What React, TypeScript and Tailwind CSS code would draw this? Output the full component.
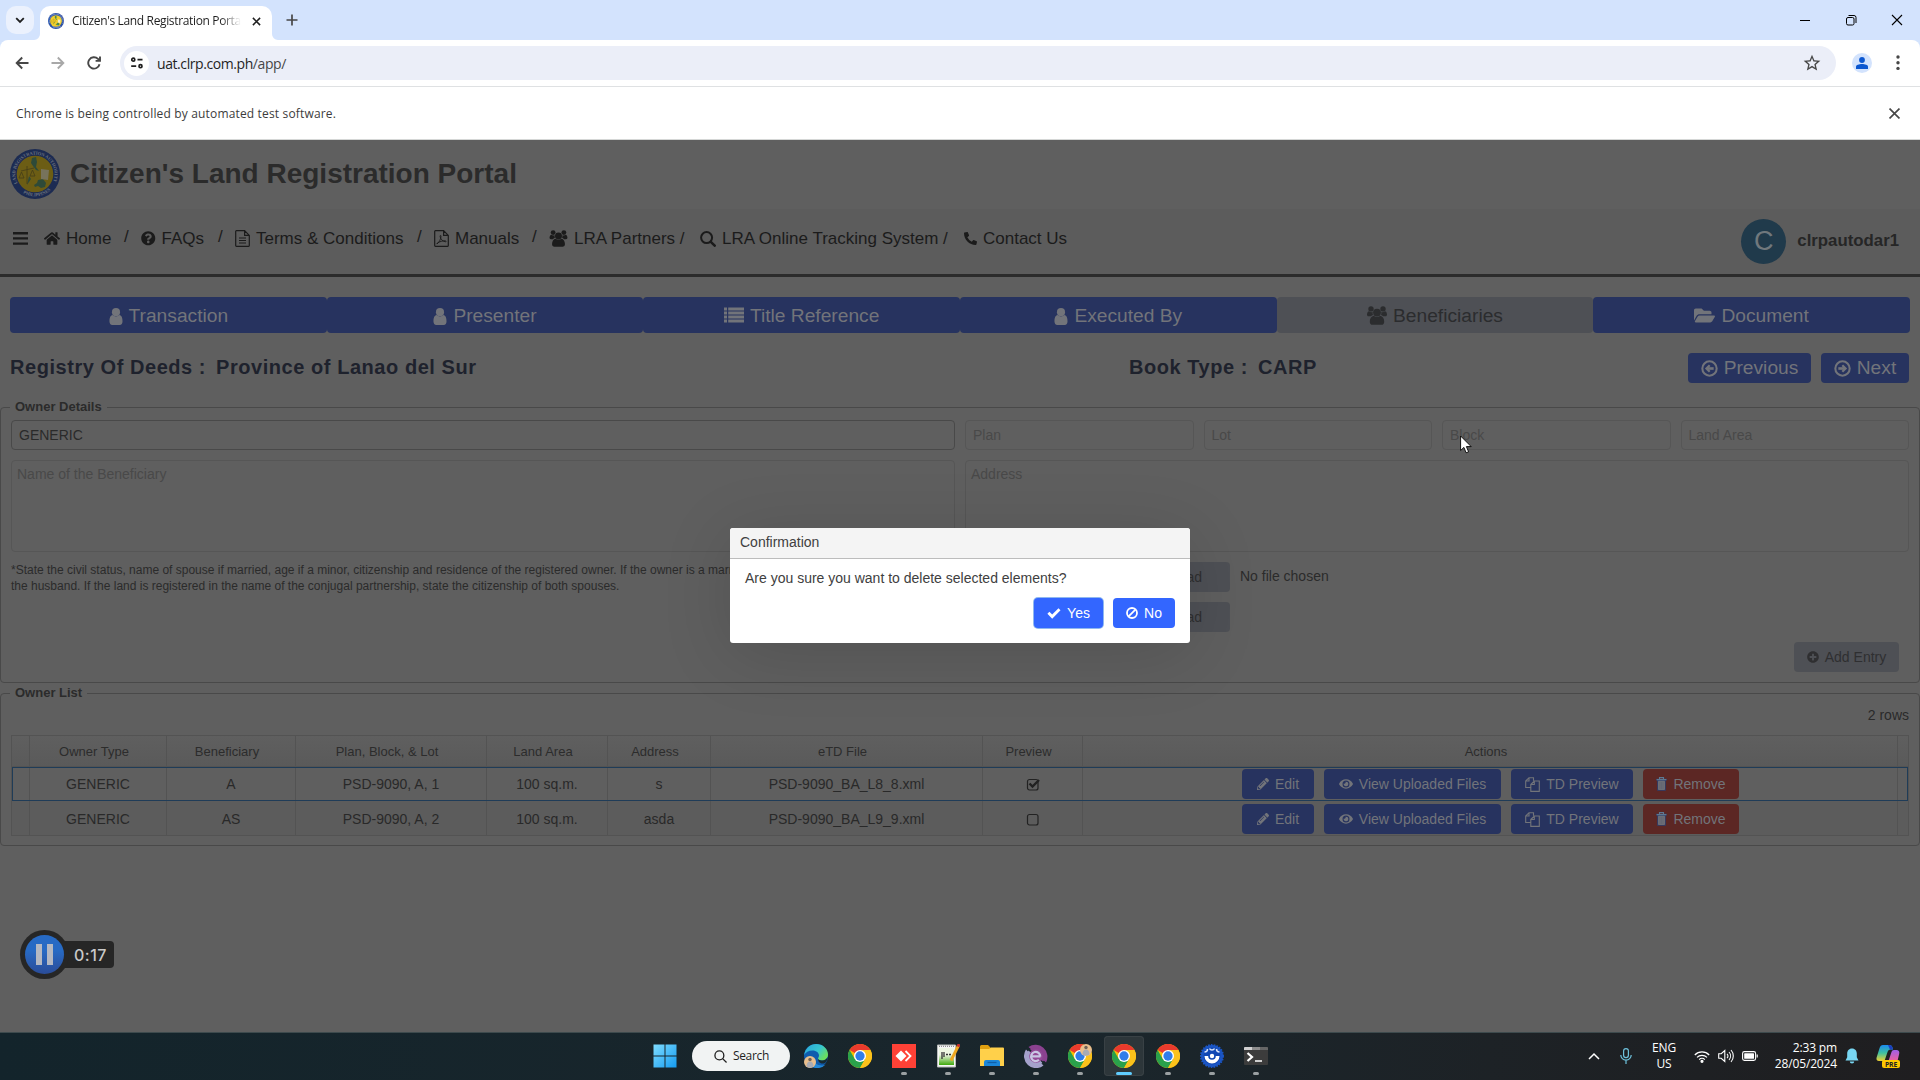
import React from "react";
import {
  FaHome,
  FaQuestionCircle,
  FaPhoneAlt,
  FaFolderOpen,
  FaPlusCircle,
  FaPencilAlt,
  FaEye,
} from "react-icons/fa";

const UI = "font-['Open_Sans','Noto_Sans',sans-serif]";

type IconProps = { className?: string };

const UserIcon = ({ className }: IconProps) => (
  <svg viewBox="0 0 14 18" className={className} fill="currentColor">
    <circle cx="7" cy="4.400" r="4.300" />
    <path d="M3.400 7.500C1 7.900.1 10.800.1 14.200c0 2 1 3.700 3 3.700h7.800c2 0 3-1.700 3-3.700 0-3.400-.9-6.300-3.300-6.700A5.200 5.200 0 0 1 7 9.100a5.200 5.200 0 0 1-3.600-1.600z" />
  </svg>
);

const UsersIcon = ({ className }: IconProps) => (
  <svg viewBox="0 0 20 19" className={className} fill="currentColor">
    <circle cx="4" cy="2.900" r="2.700" />
    <circle cx="16" cy="2.900" r="2.700" />
    <path d="M1.800 5.200C.6 5.500 0 7.200 0 8.800c0 .8.6 1.500 1.600 1.500h2.200c.7-.8 1.500-1.200 2.200-1.300A5.400 5.400 0 0 1 5.700 6L4 6.200zM18.200 5.200c1.200.3 1.800 2 1.800 3.600 0 .8-.6 1.500-1.600 1.500h-2.200c-.7-.8-1.500-1.200-2.200-1.300a5.400 5.400 0 0 0 .3-3l1.700.2z" />
    <circle cx="10" cy="6.600" r="3.900" />
    <path d="M6.800 9.700c-2.600.3-4 2.900-4 6 0 1.900 1 3.100 2.800 3.100h8.800c1.800 0 2.800-1.200 2.800-3.100 0-3.100-1.400-5.700-4-6A5 5 0 0 1 10 11a5 5 0 0 1-3.200-1.300z" />
  </svg>
);

const FileTextIcon = ({ className }: IconProps) => (
  <svg viewBox="0 0 15 17" className={className} fill="none" stroke="currentColor" strokeWidth="1.200">
    <path d="M9.600.7H1.400a.7.7 0 0 0-.7.7v14.200c0 .4.300.7.7.7h12.200c.4 0 .7-.3.700-.7V5.400zM9.600.7v4.700h4.700M4 8h7M4 10.500h7M4 13h7" />
  </svg>
);

const FilePdfIcon = ({ className }: IconProps) => (
  <svg viewBox="0 0 15 17" className={className} fill="none" stroke="currentColor" strokeWidth="1.200">
    <path d="M9.600.7H1.400a.7.7 0 0 0-.7.7v14.200c0 .4.300.7.7.7h12.200c.4 0 .7-.3.700-.7V5.400zM9.600.7v4.700h4.700" />
    <path d="M3 14c2-1.200 4.200-5.500 4-8-.1-.8-1-.7-.9.300.2 2.500 2.300 5 5.400 5.500.9 0 .8-.9-.3-1-2.500-.1-5.600.8-7.700 2.200-.8.600-1 .9-.5 1z" strokeWidth=".9" />
  </svg>
);

const ListIcon = ({ className }: IconProps) => (
  <svg viewBox="0 0 20 16" className={className} fill="currentColor">
    <path d="M0 .5h3v3H0zM0 4.500h3v3H0zM0 8.500h3v3H0zM0 12.500h3v3H0zM4.200.5H20v3H4.200zM4.200 4.500H20v3H4.200zM4.200 8.500H20v3H4.200zM4.200 12.500H20v3H4.200z" />
  </svg>
);

const SearchIcon = ({ className }: IconProps) => (
  <svg viewBox="0 0 16 16" className={className} fill="none" stroke="currentColor">
    <circle cx="6.600" cy="6.600" r="5.500" strokeWidth="2" />
    <path d="M10.800 10.800l3.900 3.900" strokeWidth="2.500" strokeLinecap="round" />
  </svg>
);

const ArrowCircle = ({ className }: IconProps) => (
  <svg viewBox="0 0 18 18" className={className} fill="none" stroke="currentColor" strokeWidth="2.200">
    <circle cx="9" cy="9" r="7.600" />
    <path d="M4.600 9h7" strokeWidth="2.800" />
    <path d="M8.800 5.600L12.200 9l-3.400 3.400" strokeWidth="2.400" />
  </svg>
);

const CopyIcon = ({ className }: IconProps) => (
  <svg viewBox="0 0 15 15" className={className} fill="none" stroke="currentColor" strokeWidth="1.100">
    <path d="M5.600 10.500H.7V4L4 .7h4.500v3M4 .7V4H.7M5.800 7.500L9.300 4h5v10.400H5.800zM9.300 4v3.500H5.800" />
  </svg>
);

const TrashIcon = ({ className }: IconProps) => (
  <svg viewBox="0 0 11 14" className={className}>
    <path d="M.3 1.800h10.400v1.600h-.9V13.700H1.200V3.400H.3z" fill="#2c3f6e" />
    <path d="M3.500 2V.6h4V2M.6 2.600h9.800" stroke="#5e7891" strokeWidth="1.100" fill="none" />
    <rect x="2" y="3.800" width="7" height="9.200" rx=".8" fill="#6c6e75" />
    <path d="M4 5v7M5.500 5v7M7 5v7" stroke="#5c6070" strokeWidth=".5" />
  </svg>
);

const CheckIcon = ({ className }: IconProps) => (
  <svg viewBox="0 0 14 11" className={className} fill="currentColor">
    <path d="M.4 5.700l2-2L5.200 6.400 11.500.3l2 2-8.300 8.400z" />
  </svg>
);

const BanIcon = ({ className }: IconProps) => (
  <svg viewBox="0 0 12 12" className={className} fill="none" stroke="currentColor" strokeWidth="1.800">
    <circle cx="6" cy="6" r="5" />
    <path d="M2.600 9.400l6.800-6.800" />
  </svg>
);

const Seal = ({ className, dim }: { className?: string; dim?: boolean }) => (
  <svg viewBox="0 0 50 50" className={className}>
    <circle cx="25" cy="25" r="25" fill={dim ? "#1c2b52" : "#2a4fa3"} />
    <circle cx="25" cy="25" r="18.300" fill={dim ? "#6c5d14" : "#f2cf2c"} />
    <defs>
      <path id="sealTop" d="M7.500 34A19.600 19.600 0 1 1 42.500 34" />
      <path id="sealBottom" d="M10 41.500A22.300 22.300 0 0 0 40 41.500" />
    </defs>
    <g fill={dim ? "#6a717d" : "#cfd8ee"} fontFamily="Liberation Serif" fontWeight="700" fontSize="4.600">
      <text textLength="78">
        <textPath href="#sealTop">LAND REGISTRATION AUTHORITY</textPath>
      </text>
      <text>
        <textPath href="#sealBottom" startOffset="4">PHILIPPINES</textPath>
      </text>
    </g>
    <path
      d="M22 9l4-1 1 5-1 5 3 4-3-1-3-4-2-3zM28 31l5-1 3 4-1 4-4 1-3-2-3 1-1-2 3-2zM19 27l2 3-4 6"
      fill={dim ? "#2e4a38" : "#4b8a4e"}
    />
    <path d="M17 17v18M11 22l13-3M9 29h5l-2.500-6zM20 27h5l-2.500-6z" stroke={dim ? "#453d18" : "#a8861c"} fill="none" strokeWidth=".8" />
    <path d="M31 20l8 1-1 10-7-1z" fill={dim ? "#77735c" : "#f4ecc8"} />
  </svg>
);

const ChromeLogo = ({ className }: IconProps) => (
  <svg viewBox="0 0 48 48" className={className}>
    <circle cx="24" cy="24" r="24" fill="#fbbc05" />
    <path d="M24 24L3.200 12A24 24 0 0 1 44.800 12L24 12z" fill="#ea3a2d" />
    <path d="M3.200 12A24 24 0 0 0 24 48L34.400 30 24 24 13.600 30z" fill="#2aa14b" />
    <path d="M24 48A24 24 0 0 0 44.800 12H24l10.400 18z" fill="#fcc21b" />
    <circle cx="24" cy="24" r="12" fill="#fff" />
    <circle cx="24" cy="24" r="9.300" fill="#2f7de9" />
  </svg>
);

/* ---------- browser chrome ---------- */

function TabStrip() {
  return (
    <div className="flex h-10 shrink-0 bg-[#d3e3fd]">
      <div className="mt-1.5 ml-1.5 flex h-7 w-7 items-center justify-center rounded-[10px] bg-[#ebf1fd]">
        <svg viewBox="0 0 10 10" className="h-2.5 w-2.5" fill="none" stroke="#1f1f1f" strokeWidth="1.800">
          <path d="M1.200 3.200L5 7l3.800-3.800" />
        </svg>
      </div>
      <svg viewBox="0 0 6 6" className="mt-[34px] h-1.5 w-1.5"><path d="M6 0v6H0A6 6 0 0 0 6 0z" fill="#fff" /></svg>
      <div className="mt-1.5 flex h-[34px] w-[232px] items-center rounded-t-[10px] bg-white pb-1">
        <Seal className="ml-2 h-4 w-4" />
        <div
          className={`${UI} ml-2 w-[169px] overflow-hidden text-[12px] tracking-[-0.35px] whitespace-nowrap text-[#1f1f1f] [mask-image:linear-gradient(to_right,black_88%,transparent)]`}
        >
          Citizen's Land Registration Portal
        </div>
        <svg viewBox="0 0 10 10" className="ml-[11px] h-[9px] w-[9px]" stroke="#1f1f1f" strokeWidth="1.700">
          <path d="M1 1l8 8M9 1L1 9" />
        </svg>
      </div>
      <svg viewBox="0 0 6 6" className="mt-[34px] h-1.5 w-1.5"><path d="M0 0v6h6A6 6 0 0 1 0 0z" fill="#fff" /></svg>
      <svg viewBox="0 0 12 12" className="mt-[14px] ml-2 h-3 w-3" stroke="#474747" strokeWidth="1.700">
        <path d="M6 .5v11M.5 6h11" />
      </svg>
      <div className="mt-[13px] mr-[17px] ml-auto flex gap-[34px] text-black">
        <svg viewBox="0 0 12 14" className="h-3.5 w-3" stroke="currentColor"><path d="M1 7.500h10" /></svg>
        <svg viewBox="0 0 12 14" className="h-3.5 w-3" fill="none" stroke="currentColor">
          <rect x="1.500" y="4.500" width="7.500" height="7.500" rx="1.500" />
          <path d="M3.500 2.500H9a2 2 0 0 1 2 2V10" />
        </svg>
        <svg viewBox="0 0 12 14" className="h-3.5 w-3" stroke="currentColor" strokeWidth="1.100"><path d="M1 2l10 10M11 2L1 12" /></svg>
      </div>
    </div>
  );
}

function Toolbar() {
  return (
    <div className="bg-[#d3e3fd]">
      <div className="flex h-[47px] items-center rounded-t-[8px] border-b border-[#dfe1e3] bg-white">
        <svg viewBox="0 0 14 14" className="ml-[15px] h-[14px] w-[14px]" fill="none" stroke="#474747" strokeWidth="1.900">
          <path d="M13.500 7H1.800M7.200 1.500L1.700 7l5.500 5.500" />
        </svg>
        <svg viewBox="0 0 14 14" className="ml-[22px] h-[14px] w-[14px]" fill="none" stroke="#a8a8a8" strokeWidth="1.900">
          <path d="M.5 7h11.700M6.800 1.500L12.300 7l-5.500 5.500" />
        </svg>
        <svg viewBox="0 0 14 14" className="ml-[22px] h-[14px] w-[14px]" fill="none" stroke="#474747" strokeWidth="1.900">
          <path d="M12.500 8.200A5.700 5.700 0 1 1 11 2.900L12.600 4.500" />
          <path d="M13 .6v4.300H8.600" />
        </svg>
        <div className="ml-[19px] flex h-[34px] w-[1716px] items-center rounded-full bg-[#ebeef8] pl-1">
          <div className="flex h-[25px] w-[25px] items-center justify-center rounded-full bg-white">
            <svg viewBox="0 0 14 12" className="h-3 w-3.5" fill="none" stroke="#1f1f1f" strokeWidth="1.700">
              <circle cx="3.300" cy="2.700" r="1.500" />
              <path d="M7.500 2.700h5M1.200 9.200h5" />
              <circle cx="10.500" cy="9.200" r="1.500" />
            </svg>
          </div>
          <div className={`${UI} ml-2 text-[14px] tracking-[-0.42px] text-[#1f1f1f]`}>
            uat.clrp.com.ph<span className="text-[#474747]">/app/</span>
          </div>
          <svg viewBox="0 0 24 24" className="mr-[14px] ml-auto h-[20px] w-[20px]" fill="#474747">
            <path d="M22 9.240l-7.190-.62L12 2 9.190 8.630 2 9.240l5.460 4.730L5.820 21 12 17.270 18.180 21l-1.630-7.030L22 9.240zM12 15.400l-3.760 2.270 1-4.280-3.320-2.880 4.380-.38L12 6.100l1.710 4.040 4.380.38-3.320 2.880 1 4.280L12 15.400z" />
          </svg>
        </div>
        <div className="ml-4 flex h-5 w-5 items-center justify-center rounded-full bg-[#d3e3fd]">
          <svg viewBox="0 0 12 12" className="h-3 w-3" fill="#0b57d0">
            <circle cx="6" cy="3" r="2.900" />
            <path d="M0 12V9.700C0 7.900 3 7 6 7s6 .9 6 2.700V12z" />
          </svg>
        </div>
        <svg viewBox="0 0 4 16" className="ml-6 h-4 w-1" fill="#474747">
          <circle cx="2" cy="2" r="1.700" /><circle cx="2" cy="7.700" r="1.700" /><circle cx="2" cy="13.400" r="1.700" />
        </svg>
      </div>
    </div>
  );
}

function InfoBar() {
  return (
    <div className="flex h-[53px] shrink-0 items-center border-b border-[#d5d7d6] bg-white pr-[20px] pl-4">
      <div className={`${UI} pt-px text-[12px] tracking-[0.16px] text-[#3c3c3c]`}>Chrome is being controlled by automated test software.</div>
      <svg viewBox="0 0 10 10" className="ml-auto h-[11px] w-[11px]" stroke="#474747" strokeWidth="1.500">
        <path d="M.5.5l9 9M9.500.5l-9 9" />
      </svg>
    </div>
  );
}

/* ---------- portal ---------- */

const NavItem = ({ w, icon, children }: { w: string; icon: React.ReactNode; children: React.ReactNode }) => (
  <div className={`flex items-center ${w}`}>
    {icon}
    {children}
  </div>
);
const Slash = () => <span className="relative -top-0.5">/</span>;

function PortalHeader() {
  return (
    <>
      <div className="flex h-[69px] shrink-0 items-center bg-[#5f5f5f] pb-[2px] pl-[10px]">
        <Seal className="h-[50px] w-[50px]" dim />
        <h1 className="ml-[10px] text-[28px] font-bold text-[#2b2b2b]">Citizen's Land Registration Portal</h1>
      </div>
      <div className="flex h-[68px] shrink-0 border-b-[3px] border-[#2b2b2b] bg-[#5c5c5c] text-[17px] whitespace-nowrap text-[#1b1b1b]">
        <div className="flex h-[59px] items-center pl-[13px]">
          <svg viewBox="0 0 15 13" className="mr-4 h-[13px] w-[15px]" fill="currentColor">
            <path d="M0 0h15v2.400H0zM0 5.200h15v2.400H0zM0 10.400h15v2.400H0z" />
          </svg>
          <NavItem w="w-[80px]" icon={<FaHome className="mr-[6px] h-[15px] w-[16px]" />}>Home</NavItem>
          <NavItem w="w-[17px]" icon={null}><Slash /></NavItem>
          <NavItem w="w-[77px]" icon={<FaQuestionCircle className="mr-[6px] h-[14.500px] w-[14.500px]" />}>FAQs</NavItem>
          <NavItem w="w-[17px]" icon={null}><Slash /></NavItem>
          <NavItem w="w-[182px]" icon={<FileTextIcon className="mr-[6px] h-[17px] w-[15px]" />}>Terms &amp; Conditions</NavItem>
          <NavItem w="w-[17px]" icon={null}><Slash /></NavItem>
          <NavItem w="w-[98px]" icon={<FilePdfIcon className="mr-[6px] h-[17px] w-[15px]" />}>Manuals</NavItem>
          <NavItem w="w-[17px]" icon={null}><Slash /></NavItem>
          <NavItem w="w-[151px]" icon={<UsersIcon className="mr-[6px] h-[17px] w-[19px]" />}>LRA Partners /</NavItem>
          <NavItem w="w-[264px]" icon={<SearchIcon className="mr-[6px] h-[16px] w-[16px]" />}>LRA Online Tracking System /</NavItem>
          <NavItem w="w-[110px]" icon={<FaPhoneAlt className="mr-[6px] h-[13px] w-[13px] rotate-90 -scale-x-100" />}>Contact Us</NavItem>
        </div>
        <div className="mr-[21px] ml-auto flex items-center">
          <div className="flex h-[45px] w-[45px] items-center justify-center rounded-full bg-[#203a4b] text-[27px] text-[#70787d]">C</div>
          <div className="ml-[11px] pb-[2px] text-[16.800px] font-bold text-[#262626]">clrpautodar1</div>
        </div>
      </div>
    </>
  );
}

const steps = [
  { label: "Transaction", icon: <UserIcon className="mr-[6px] h-[17px] w-[14px]" /> },
  { label: "Presenter", icon: <UserIcon className="mr-[6px] h-[17px] w-[14px]" /> },
  { label: "Title Reference", icon: <ListIcon className="mr-[6px] mb-[2px] h-[16px] w-[20px]" /> },
  { label: "Executed By", icon: <UserIcon className="mr-[6px] h-[17px] w-[14px]" /> },
  { label: "Beneficiaries", icon: <UsersIcon className="mr-[6px] mb-px h-[19px] w-[20px]" />, active: true },
  { label: "Document", icon: <FaFolderOpen className="mr-[6px] mb-[2px] h-[19px] w-[21px]" /> },
];

function Steps() {
  return (
    <div className="mx-[10px] mt-5 grid h-9 shrink-0 grid-cols-6 text-[19.200px]">
      {steps.map((s) => (
        <div
          key={s.label}
          className={`flex items-center justify-center rounded-[4px] pt-[2px] ${s.active ? "bg-[#4e5055] text-[#2b2c2e]" : "bg-[#27335f] text-[#72747a]"}`}
        >
          {s.icon}
          {s.label}
        </div>
      ))}
    </div>
  );
}

function RegistryRow() {
  return (
    <div className="mt-5 flex h-[30px] shrink-0 pr-[11px] pl-[10px]">
      <div className="w-[1119px] text-[20px] leading-[28px] font-bold tracking-[0.550px] text-[#1e222d]">
        Registry Of Deeds :<span className="ml-[10px]">Province of Lanao del Sur</span>
      </div>
      <div className="text-[20px] leading-[28px] font-bold tracking-[0.550px] text-[#1e222d]">
        Book Type :<span className="ml-[10px]">CARP</span>
      </div>
      <div className="ml-auto flex gap-[10px] text-[19.200px] text-[#72747a]">
        <div className="flex w-[123px] items-center justify-center rounded-[4px] bg-[#27335f]">
          <ArrowCircle className="mr-[6px] h-[17px] w-[17px] -scale-x-100" />Previous
        </div>
        <div className="flex w-[88px] items-center justify-center rounded-[4px] bg-[#27335f]">
          <ArrowCircle className="mr-[6px] h-[17px] w-[17px]" />Next
        </div>
      </div>
    </div>
  );
}

const Legend = ({ children }: { children: React.ReactNode }) => (
  <legend className="-ml-px h-[15px] px-[5px] text-[13px] leading-[13px] font-bold text-[#2b2b2b]">{children}</legend>
);

const Field = ({ children }: { children: React.ReactNode }) => (
  <div className="h-[30px] rounded-[4px] border border-[#565656] px-[7px] text-[14px] leading-[29px] text-[#494949]">{children}</div>
);

function OwnerDetails() {
  return (
    <fieldset className="mt-[17px] h-[283px] shrink-0 rounded-[4px] border border-[#494949] px-[10px]">
      <Legend>Owner Details</Legend>
      <div className="mt-[5px] grid grid-cols-[944px_944px] gap-x-[10px] gap-y-[10px]">
        <div className="h-[30px] rounded-[4px] border border-[#494949] px-[7px] text-[14px] leading-[29px] text-[#2a2a2a]">GENERIC</div>
        <div className="grid grid-cols-4 gap-[10px]">
          <Field>Plan</Field>
          <Field>Lot</Field>
          <Field>Block</Field>
          <Field>Land Area</Field>
        </div>
        <div className="h-[92px] rounded-[4px] border border-[#565656] px-[5px] pt-[5px] text-[14px] leading-[17px] text-[#494949]">Name of the Beneficiary</div>
        <div className="h-[92px] rounded-[4px] border border-[#565656] px-[5px] pt-[5px] text-[14px] leading-[17px] text-[#494949]">Address</div>
        <p className="text-[12px] leading-[16px] text-[#2b2b2b]">
          *State the civil status, name of spouse if married, age if a minor, citizenship and residence of the registered owner. If the owner is a married
          <br />
          the husband. If the land is registered in the name of the conjugal partnership, state the citizenship of both spouses.
        </p>
        <div className="ml-[135px] flex gap-[10px] text-[14px] text-[#2f2f31]">
          <div className="flex flex-col gap-[10px]">
            <div className="h-[30px] w-[130px] rounded-[4px] bg-[#4e5055] pr-7 text-right leading-[30px]">Upload</div>
            <div className="h-[30px] w-[130px] rounded-[4px] bg-[#4e5055] pr-7 text-right leading-[30px]">Upload</div>
          </div>
          <div className="leading-[28px] text-[#2b2b2b]">No file chosen</div>
        </div>
      </div>
      <div className="mt-[10px] mr-[10px] ml-auto flex h-[30px] w-[105px] items-center justify-center rounded-[4px] bg-[#4e5055] text-[14px] text-[#2f2f31]">
        <FaPlusCircle className="mr-[6px] h-[12px] w-[12px]" />Add Entry
      </div>
    </fieldset>
  );
}

const columns = ["", "Owner Type", "Beneficiary", "Plan, Block, & Lot", "Land Area", "Address", "eTD File", "Preview", "Actions", ""];
const rows = [
  ["GENERIC", "A", "PSD-9090, A, 1", "100 sq.m.", "s", "PSD-9090_BA_L8_8.xml"],
  ["GENERIC", "AS", "PSD-9090, A, 2", "100 sq.m.", "asda", "PSD-9090_BA_L9_9.xml"],
];
const GRID = "grid grid-cols-[18px_137px_129px_191px_121px_103px_272px_100px_815px_10px]";

const RowButton = ({ w, icon, red, children }: { w: string; icon: React.ReactNode; red?: boolean; children: React.ReactNode }) => (
  <div className={`flex h-[30px] items-center justify-center rounded-[4px] text-[#72747a] ${w} ${red ? "bg-[#5c2724]" : "bg-[#27335f]"}`}>
    {icon}
    {children}
  </div>
);

function OwnerList() {
  return (
    <fieldset className="mt-[3px] h-[160px] shrink-0 rounded-[4px] border border-[#494949] px-[10px]">
      <Legend>Owner List</Legend>
      <div className="h-[34px] pt-[6px] text-right text-[14px] leading-[17px] text-[#2a2a2a]">2 rows</div>
      <div className="w-[1898px] border border-[#535353]">
        <div className={`${GRID} h-[31px] border-b border-[#535353] bg-linear-to-b from-[#5f5f5f] to-[#5a5a5a] text-[13px] leading-[31px] text-[#2c2c2c]`}>
          {columns.map((c, i) => (
            <div key={i} className={`h-[30px] pr-[8px] text-center ${i < 9 ? "border-r border-[#535353]" : ""}`}>{c}</div>
          ))}
        </div>
        {rows.map((r, ri) => (
          <div
            key={ri}
            className={`${GRID} h-[34px] text-center text-[14px] text-[#292929] ${ri === 0 ? "leading-[34px] outline-1 -outline-offset-1 outline-[#1f3c58]" : "bg-[#5c5c5c] leading-[36px]"}`}
          >
            <div className="border-r border-[#535353]" />
            {r.map((cell, i) => (
              <div key={i} className="h-[34px] border-r border-[#535353]">{cell}</div>
            ))}
            <div className={`flex h-[34px] items-center justify-center border-r border-[#535353] ${ri === 1 ? "pt-[2px]" : ""}`}>
              <svg viewBox="0 0 14 13" className="h-[13px] w-[14px]" fill="none" stroke="#222">
                <rect x="1.500" y="1.500" width="10.500" height="10.500" rx="2" strokeWidth="1.200" />
                {ri === 0 && <path d="M3.500 5.500l3 3L13 2" strokeWidth="2.400" />}
              </svg>
            </div>
            <div className={`flex h-[34px] items-center gap-[10px] border-r border-[#535353] pl-[159px] ${ri === 1 ? "pt-[2px]" : ""}`}>
              <RowButton w="w-[72px]" icon={<FaPencilAlt className="mr-[6px] h-[12px] w-[12px]" />}>Edit</RowButton>
              <RowButton w="w-[177px]" icon={<FaEye className="mr-[6px] h-[14px] w-[14px]" />}>View Uploaded Files</RowButton>
              <RowButton w="w-[122px]" icon={<CopyIcon className="mr-[6px] h-[15px] w-[15px]" />}>TD Preview</RowButton>
              <RowButton w="w-[96px]" red icon={<TrashIcon className="mr-[6px] h-[14px] w-[11px]" />}>Remove</RowButton>
            </div>
            <div />
          </div>
        ))}
      </div>
    </fieldset>
  );
}

function ConfirmDialog() {
  return (
    <div className="absolute top-[528px] left-[730px] h-[115px] w-[460px] rounded-[3px] bg-white text-[14px] text-[#404040] shadow-[0_10px_70px_rgba(0,0,0,0.14)]">
      <div className="h-[31px] rounded-t-[3px] border-b border-[#bcbcbc] bg-[#f4f4f4] pl-[10px] leading-[29px]">Confirmation</div>
      <div className="pt-[11px] pl-[15px] leading-[17px]">Are you sure you want to delete selected elements?</div>
      <div className="mt-[11px] mr-[15px] flex justify-end gap-[10px] text-white">
        <div className="flex h-[30px] w-[69px] items-center justify-center rounded-[4px] bg-[#3366ff] shadow-[0_0_0_1px_#8fb8f0]">
          <CheckIcon className="mr-[6px] h-[11px] w-[14px]" />Yes
        </div>
        <div className="flex h-[30px] w-[62px] items-center justify-center rounded-[4px] bg-[#3366ff]">
          <BanIcon className="mr-[6px] h-[12px] w-[12px]" />No
        </div>
      </div>
    </div>
  );
}

function Recorder() {
  return (
    <div className="absolute top-[930px] left-[20px] flex h-[49px] items-center">
      <div className="z-10 flex h-[49px] w-[49px] items-center justify-center rounded-full bg-[#262626]">
        <div className="flex h-[39px] w-[39px] items-center justify-center gap-[5px] rounded-full bg-linear-to-b from-[#276ac4] from-40% to-[#2a4c98]">
          <div className="h-[21px] w-[6px] bg-[#b4b8c2]" />
          <div className="h-[21px] w-[6px] bg-[#b4b8c2]" />
        </div>
      </div>
      <div className="-ml-[8px] h-[27px] w-[53px] rounded-[4px] bg-[#262626] pl-[13px] font-['Inter','Liberation_Sans',sans-serif] text-[16px] leading-[29px] font-medium tracking-[0.5px] text-[#c9c9c9]">0:17</div>
    </div>
  );
}

/* ---------- taskbar ---------- */

const AppSlot = ({ children, mark, active }: { children: React.ReactNode; mark?: boolean; active?: boolean }) => (
  <div className={`relative mx-[2px] flex h-10 w-10 items-center justify-center rounded-[4px] ${active ? "bg-[#2d363a] shadow-[inset_0_0_0_1px_#394145]" : ""}`}>
    {children}
    {mark && <span className={`absolute bottom-[1px] h-[3px] rounded-full ${active ? "w-4 bg-[#60cdff]" : "w-1.5 bg-[#9ba0a2]"}`} />}
  </div>
);

const Avatar = ({ cx, cy }: { cx: number; cy: number }) => (
  <g>
    <circle cx={cx} cy={cy} r="6" fill="#e9bf8d" />
    <circle cx={cx} cy={cy - 2.500} r="1.700" fill="#6e6258" />
    <path d={`M${cx - 3.500} ${cy + 4.500}c0-3 1-5 3.500-5s3.500 2 3.500 5a6 6 0 0 1-7 0z`} fill="#a9abb3" />
  </g>
);

const EdgeLogo = () => (
  <svg viewBox="0 0 24 24" className="h-6 w-6">
    <defs>
      <linearGradient id="edgeA" x1="0" y1="0" x2="1" y2=".6">
        <stop offset="0" stopColor="#2aa5dc" /><stop offset=".6" stopColor="#37c6d0" /><stop offset="1" stopColor="#6be05c" />
      </linearGradient>
    </defs>
    <circle cx="12" cy="12" r="12" fill="#0f5cae" />
    <path d="M.2 11C1 4.500 6 0 12.200 0 19 0 24 5 24 10.500c0 3.500-2.500 6-6 6-2.800 0-4.200-1-4-2 .1-.7 1-1.200 1-2.900 0-2.500-2.500-5-6.500-5C4.500 6.600 1.500 8.500.2 11z" fill="url(#edgeA)" />
    <path d="M9 13c0 5 4 8.500 9 8.500 2 0 3-.5 4-1.200A12 12 0 0 1 12 24C7 24 5 18 9 13z" fill="#2388d8" />
    <path d="M14.500 14.200c-.6 1 .8 2.300 3.500 2.300 3 0 4.800-1.600 5.600-3.500-.2 4-2 6.500-4.600 6.500-4 0-5.500-3-4.500-5.300z" fill="#182a30" />
    <Avatar cx={6} cy={18} />
  </svg>
);

function Taskbar() {
  return (
    <div className="relative flex h-12 w-full shrink-0 items-center border-t border-[#3d4a4d] bg-linear-to-r from-[#13242b] via-[#1a262c] via-55% to-[#1f1e20] pb-px">
      <svg viewBox="0 0 24 24" className="ml-[653px] h-6 w-6">
        <defs>
          <linearGradient id="win" x1="0" y1="0" x2="1" y2="1"><stop offset="0" stopColor="#7fdcff" /><stop offset="1" stopColor="#149bf0" /></linearGradient>
        </defs>
        <path d="M.5.500h11v11H.5zM12.500.500h11v11h-11zM.5 12.500h11v11H.5zM12.500 12.500h11v11h-11z" fill="url(#win)" />
      </svg>
      <div className={`${UI} mr-[4px] ml-[15px] flex h-[30px] w-[98px] items-center rounded-full bg-[#f1f3f3] text-[12px] tracking-[-0.350px] text-[#1f1f1f]`}>
        <svg viewBox="0 0 14 14" className="mr-[6px] ml-[22px] h-[13px] w-[13px]" fill="none" stroke="#1f1f1f" strokeWidth="1.400">
          <circle cx="5.800" cy="5.800" r="4.800" /><path d="M9.300 9.300l4.200 4.200" />
        </svg>
        Search
      </div>
      <div className="flex items-center">
        <AppSlot><EdgeLogo /></AppSlot>
        <AppSlot><ChromeLogo className="h-6 w-6" /></AppSlot>
        <AppSlot mark>
          <svg viewBox="0 0 24 24" className="h-6 w-6">
            <path d="M0 0h24v24H0z" fill="#ff4136" />
            <path d="M9 6.500l5.500 5.500L9 17.500 3.500 12z" fill="#fff" />
            <path d="M13.500 7l5 5-5 5" fill="none" stroke="#fff" strokeWidth="1.800" />
          </svg>
        </AppSlot>
        <AppSlot mark>
          <svg viewBox="0 0 24 24" className="h-6 w-6">
            <defs><linearGradient id="npp" x1="0" y1="0" x2="0" y2="1"><stop offset=".4" stopColor="#eef7e2" /><stop offset="1" stopColor="#3fa80c" /></linearGradient></defs>
            <path d="M1.500 1h18v22h-18z" fill="#f5f5f5" stroke="#b9bcb9" />
            <path d="M3 4h15v17H3z" fill="url(#npp)" />
            <path d="M3 2.300h15" stroke="#777" strokeDasharray="1 1" />
            <path d="M6 8v7M8 8v5M10 10.500h2M13 10.500h2" stroke="#333" strokeWidth="1.300" />
            <path d="M22.500 1.500l-7.500 15" stroke="#f0a820" strokeWidth="3" />
            <path d="M23.200 0l-1.300 2.600" stroke="#c8302c" strokeWidth="3" />
          </svg>
        </AppSlot>
        <AppSlot mark>
          <svg viewBox="0 0 24 24" className="h-6 w-6">
            <path d="M0 2.500A1.500 1.500 0 0 1 1.500 1H8l2.500 2.500V8H0z" fill="#e0a010" />
            <path d="M0 5h9l2-1.500h12a1 1 0 0 1 1 1V22H0z" fill="#ffd04a" />
            <path d="M4 22v-4a2 2 0 0 1 2-2h12a2 2 0 0 1 2 2v4z" fill="#1b86d8" />
            <path d="M7.500 18.500h9" stroke="#0f5fa8" strokeWidth="1.200" />
          </svg>
        </AppSlot>
        <AppSlot mark>
          <svg viewBox="0 0 24 24" className="h-6 w-6">
            <path d="M4.500 3A12 12 0 0 1 22 18.500z" fill="#8b4290" />
            <path d="M2 5.500A12 12 0 0 0 19.500 21.500L16 18 5 8.500z" fill="#a5a2cc" />
            <path d="M12 12L4.500 6.500A9.500 9.500 0 0 1 19.500 18z" fill="#8b4290" />
            <path d="M12 12L4.500 6.500A9.500 9.500 0 0 0 18.500 19z" fill="#a5a2cc" />
            <circle cx="12" cy="12" r="6.800" fill="#924a96" />
            <path d="M7 12.300h9.500M16.300 12.500a4.600 4.600 0 1 0-1.400 3.300" fill="none" stroke="#c9c6e4" strokeWidth="2.200" />
            <path d="M2.500 3.500l4.500 3.800M18.500 17.500l4 3.300" stroke="#1a272d" strokeWidth="1.800" />
          </svg>
        </AppSlot>
        <AppSlot mark>
          <div className="relative">
            <ChromeLogo className="h-6 w-6" />
            <svg viewBox="0 0 24 24" className="absolute inset-0 h-6 w-6 overflow-visible"><Avatar cx={18} cy={6} /></svg>
          </div>
        </AppSlot>
        <AppSlot mark active><ChromeLogo className="h-6 w-6" /></AppSlot>
        <AppSlot mark><ChromeLogo className="h-6 w-6" /></AppSlot>
        <AppSlot mark>
          <svg viewBox="0 0 24 24" className="h-6 w-6">
            <circle cx="12" cy="12" r="11" fill="#1b55c4" stroke="#1b55c4" strokeWidth="2" strokeDasharray="1.600 1.200" />
            <circle cx="12" cy="12" r="8.500" fill="#1148b4" />
            <path d="M4.500 12a7.500 7.500 0 0 0 15 0h-3.700a3.800 3.800 0 0 1-7.600 0z" fill="#fff" />
            <circle cx="12" cy="12" r="2.200" fill="#fff" />
            <path d="M9.500 4.500c1 2 4 2 5 0M4.500 8c2 0 3-1 3-3M19.500 8c-2 0-3-1-3-3" stroke="#d8e4fa" strokeWidth="1.500" fill="none" />
          </svg>
        </AppSlot>
        <AppSlot mark>
          <svg viewBox="0 0 24 24" className="h-6 w-6">
            <rect y="3" width="24" height="18" rx="1" fill="#3c3c3c" />
            <path d="M0 4a1 1 0 0 1 1-1h7v3H0z" fill="#d0d0d0" /><path d="M8 3h8v3H8z" fill="#8d8d8d" /><path d="M16 3h7a1 1 0 0 1 1 1v2h-8z" fill="#666" />
            <path d="M3.500 9l4.500 4-4.500 4" fill="none" stroke="#fff" strokeWidth="2.200" /><path d="M11 17h7" stroke="#fff" strokeWidth="1.500" />
          </svg>
        </AppSlot>
      </div>
      <div className={`${UI} ml-auto flex items-center pr-[20px] text-[12px] leading-[16px] tracking-[-0.15px] text-white`}>
        <svg viewBox="0 0 12 8" className="h-2 w-3" fill="none" stroke="#fff" strokeWidth="1.500"><path d="M1 7l5-5 5 5" /></svg>
        <svg viewBox="0 0 12 16" className="ml-5 h-4 w-3" fill="none" stroke="#6ec2dc" strokeWidth="1.200">
          <rect x="3.600" y=".6" width="4.800" height="9" rx="2.400" /><path d="M.8 7a5.200 5.200 0 0 0 10.400 0M6 12.200V16" />
        </svg>
        <div className="ml-[20px] w-[24px] text-center"><div>ENG</div><div>US</div></div>
        <svg viewBox="0 0 16 13" className="ml-[18px] h-[13px] w-4" fill="none" stroke="#fff" strokeWidth="1.200">
          <path d="M.8 5a10 10 0 0 1 14.400 0M3 7.400a7 7 0 0 1 10 0M5.200 9.600a4 4 0 0 1 5.600 0" /><circle cx="8" cy="11.300" r="1" fill="#fff" />
        </svg>
        <svg viewBox="0 0 16 14" className="ml-[8px] h-[14px] w-4" fill="none" stroke="#fff" strokeWidth="1.100">
          <path d="M.7 4.700h2.500L6.800 1.500v11L3.200 9.300H.7zM9 4.800a3 3 0 0 1 0 4.400M11 3a6 6 0 0 1 0 8M13 1a9 9 0 0 1 0 12" />
        </svg>
        <svg viewBox="0 0 16 10" className="ml-[8px] h-[10px] w-4" fill="none" stroke="#fff" strokeWidth="1.100">
          <rect x=".6" y=".6" width="13" height="8.800" rx="1.800" /><rect x="2.200" y="2.200" width="9.800" height="5.600" rx=".6" fill="#fff" stroke="none" /><path d="M15.200 3.400v3.200" />
        </svg>
        <div className="ml-[14px] w-[65px] text-right whitespace-nowrap"><div>2:33 pm</div><div>28/05/2024</div></div>
        <svg viewBox="0 0 14 16" className="ml-[8px] h-4 w-[14px]" fill="#78d6f2">
          <path d="M7 .5C3.800.5 2.200 3 2.200 5.500v3.800L.5 12.500h13l-1.700-3.200V5.500C11.800 3 10.200.5 7 .5zM4.800 13.500h4.400a2.200 2 0 0 1-4.400 0z" />
        </svg>
        <svg viewBox="0 0 24 24" className="ml-[17px] h-6 w-6">
          <defs>
            <linearGradient id="cpA" x1="0" y1="0" x2="0" y2="1"><stop offset="0" stopColor="#1b8cf0" /><stop offset=".5" stopColor="#3fc0a0" /><stop offset="1" stopColor="#f0d030" /></linearGradient>
            <linearGradient id="cpB" x1="0" y1="0" x2="0" y2="1"><stop offset="0" stopColor="#a060e8" /><stop offset="1" stopColor="#f0609a" /></linearGradient>
          </defs>
          <path d="M7 1h6.500a3 3 0 0 1 2.800 2L17 5.500h-2.500a3 3 0 0 0-2.800 2L9 15.500c-.4 1-1 1.500-2 1.500H3c-2 0-3-1.500-2.400-3.500l3-9.500C4.200 2 5.200 1 7 1z" fill="url(#cpA)" />
          <path d="M12.500 17l3-9c.4-1.300 1.200-2 2.500-2h2.500c2 0 3.300 1.600 2.700 3.700L21.500 17z" fill="url(#cpB)" />
          <path d="M12 1h1.500a3 3 0 0 1 2.800 2L17 5.500h-3z" fill="#1c3fc0" />
          <rect x="6" y="16" width="18" height="8" rx="2" fill="#ffc800" />
          <text x="15" y="22.600" fontSize="6.800" fontWeight="700" textAnchor="middle" fill="#222" fontFamily="Open Sans">PRE</text>
        </svg>
      </div>
    </div>
  );
}

export default function App() {
  return (
    <div className="relative flex h-[1080px] w-[1920px] flex-col overflow-hidden bg-[#5f5f5f] font-['Liberation_Sans',Arial,sans-serif]">
      <TabStrip />
      <Toolbar />
      <InfoBar />
      <main className="flex min-h-0 flex-1 flex-col">
        <PortalHeader />
        <Steps />
        <RegistryRow />
        <OwnerDetails />
        <OwnerList />
      </main>
      <Taskbar />
      <ConfirmDialog />
      <Recorder />
      <svg viewBox="0 0 12 19" className="absolute top-[435px] left-[1460px] h-[19px] w-3">
        <path d="M.6 1v14.500l3.300-3.100 2.200 5.400 2.500-1-2.200-5.200h4.800z" fill="#fff" stroke="#000" strokeWidth=".9" />
      </svg>
    </div>
  );
}
